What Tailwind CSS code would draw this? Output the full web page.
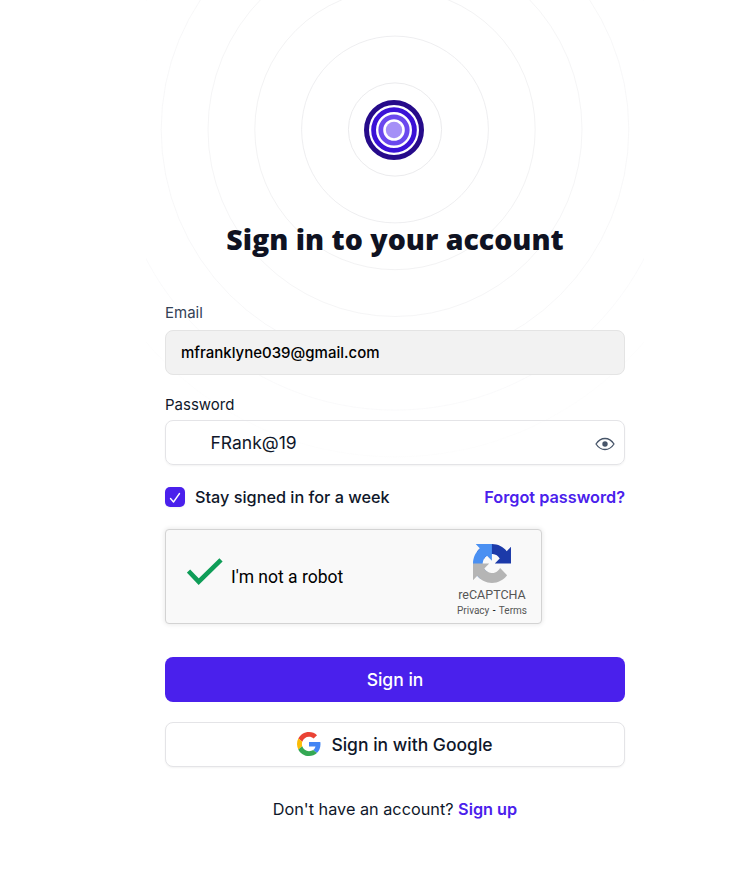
<!DOCTYPE html>
<html lang="en">
<head>
<meta charset="utf-8">
<title>Sign in</title>
<script src="https://cdn.jsdelivr.net/npm/@tailwindcss/browser@4"></script>
</head>
<body class="relative h-[877px] overflow-hidden bg-white font-['Inter',sans-serif] text-[#0f172a]">
<svg class="absolute left-[146px] top-0" width="498" height="460" viewBox="146 0 498 460" fill="none" stroke="#e6e6e9">
  <circle cx="395" cy="129.5" r="46.6" stroke-opacity=".8"/>
  <circle cx="395" cy="129.5" r="93.4" stroke-opacity=".68"/>
  <circle cx="395" cy="129.5" r="140.2" stroke-opacity=".53"/>
  <circle cx="395" cy="129.5" r="187" stroke-opacity=".4"/>
  <circle cx="395" cy="129.5" r="233.8" stroke-opacity=".3"/>
  <circle cx="395" cy="129.5" r="280.6" stroke-opacity=".2"/>
  <circle cx="395" cy="129.5" r="327.4" stroke-opacity=".08"/>
</svg>
<main class="relative ml-[165px] flex w-[460px] flex-col pt-[100px]">
  <svg class="ml-[199px] size-[60px]" viewBox="0 0 60 60" fill="none">
    <circle cx="30" cy="30" r="27.5" stroke="#260b8a" stroke-width="5"/>
    <circle cx="30" cy="30" r="20.4" stroke="#3a12d6" stroke-width="4.8"/>
    <circle cx="30" cy="30" r="13.2" stroke="#6a48ee" stroke-width="4.8"/>
    <circle cx="30" cy="30" r="8.2" fill="#a590f7"/>
  </svg>
  <h1 class="mt-[60px] h-10 whitespace-nowrap text-center font-['Open_Sans',sans-serif] text-[28.5px] leading-[39px] font-extrabold text-[#0f1222]">Sign in to your account</h1>
  <label class="mt-[43px] h-5 text-[15px] leading-5 text-[#334155]">Email</label>
  <div class="mt-[7px] flex h-[45px] items-center rounded-lg border border-[#e4e4e4] bg-[#f2f2f2] px-[15px] pt-px text-[15px] font-medium text-black">mfranklyne039@gmail.com</div>
  <label class="mt-5 h-5 text-[15px] leading-5">Password</label>
  <div class="mt-[5px] flex h-[45px] items-center justify-between rounded-lg border border-[#e4e4e7] pt-px pr-[9px] pl-[44.5px] text-[17.5px] shadow-xs">
    <span>FRank@19</span>
    <svg class="mt-[2px]" width="20" height="14" viewBox="0 0 20 14" fill="none"><path d="M1 7C3.500 3.200 6.500 1.500 10 1.500S16.500 3.200 19 7C16.500 10.800 13.500 12.500 10 12.500S3.500 10.800 1 7Z" stroke="#475569" stroke-width="1.300" stroke-linejoin="round"/><circle cx="10" cy="7" r="2.700" fill="#475569"/></svg>
  </div>
  <div class="mt-[22px] flex h-5 items-center text-[16.25px] font-medium">
    <span class="mr-[10px] flex size-5 items-center justify-center rounded-[5px] bg-[#4a20ec] shadow-xs"><svg width="20" height="20" fill="none" stroke="#fff" stroke-width="1.350" stroke-linecap="round" stroke-linejoin="round"><path d="M5.500 11.500L8.500 15L14.500 6.500"/></svg></span>
    <span>Stay signed in for a week</span>
    <a class="ml-auto font-semibold text-[#4a20ec]">Forgot password?</a>
  </div>
  <section class="mt-[22px] flex h-[95px] w-[377px] rounded-[4px] border border-[#d3d3d3] bg-[#f9f9f9] font-['Roboto',sans-serif] shadow-[0_0_4px_1px_rgba(0,0,0,0.08)]">
    <svg class="mt-[28px] ml-[21px]" width="37" height="29" fill="none"><path d="M1.500 13L11.700 23.700L34 1.800" stroke="#0f9d58" stroke-width="4.600"/></svg>
    <span class="mt-[35px] ml-[7px] text-[17.500px] leading-6 text-black">I'm not a robot</span>
    <div class="mr-[14px] ml-auto flex w-[70px] flex-col items-center pt-[14px] text-[#555]">
      <svg width="38" height="39" viewBox="0 0 64 64" preserveAspectRatio="none">
        <path d="M64 31.955l-.033-1.370V4.687l-7.160 7.160C50.948 4.674 42.033.093 32.050.093c-10.400 0-19.622 4.960-25.458 12.640l11.736 11.860a15.550 15.550 0 0 1 4.754-5.334c2.050-1.600 4.952-2.906 8.968-2.906.485 0 .860.057 1.135.163 4.976.393 9.288 3.140 11.828 7.124l-8.307 8.307L64 31.953" fill="#1c3aa9"/>
        <path d="M31.862.094l-1.370.033H4.594l7.160 7.160C4.580 13.147 0 22.060 0 32.046c0 10.400 4.960 19.622 12.640 25.458L24.500 45.768a15.550 15.550 0 0 1-5.334-4.754c-1.600-2.050-2.906-4.952-2.906-8.968 0-.485.057-.860.163-1.135.393-4.976 3.140-9.288 7.124-11.828l8.307 8.307L31.860.095" fill="#4a90f2"/>
        <path d="M.001 32.045l.033 1.370v25.898l7.160-7.160c5.860 7.173 14.774 11.754 24.760 11.754 10.400 0 19.622-4.960 25.458-12.640l-11.736-11.860a15.550 15.550 0 0 1-4.754 5.334c-2.050 1.600-4.952 2.906-8.968 2.906-.485 0-.860-.057-1.135-.163-4.976-.393-9.288-3.140-11.828-7.124l8.307-8.307L.001 32.045" fill="#b5b5b5"/>
      </svg>
      <div class="mt-1 text-[12.500px] leading-[15px]">reCAPTCHA</div>
      <div class="mt-[2px] whitespace-nowrap text-[10px] leading-[13px]">Privacy <span class="px-[1px] text-black">-</span> Terms</div>
    </div>
  </section>
  <button class="mt-[33px] h-[45px] rounded-lg bg-[#4a20ec] pt-px text-[17.5px] font-medium text-white">Sign in</button>
  <button class="mt-5 flex h-[45px] items-center justify-center gap-[10px] rounded-lg border border-[#e4e4e7] bg-white text-[17.5px] font-medium shadow-xs">
    <svg class="-mt-px" width="24" height="24" viewBox="0 0 48 48"><path fill="#EA4335" d="M24 9.500c3.540 0 6.710 1.220 9.210 3.600l6.850-6.850C35.900 2.380 30.470 0 24 0 14.620 0 6.510 5.380 2.560 13.220l7.980 6.190C12.430 13.720 17.740 9.500 24 9.500z"/><path fill="#4285F4" d="M46.980 24.550c0-1.570-.15-3.090-.38-4.550H24v9.020h12.940c-.58 2.960-2.260 5.480-4.780 7.180l7.730 6c4.510-4.180 7.090-10.360 7.090-17.650z"/><path fill="#FBBC05" d="M10.530 28.590c-.48-1.450-.76-2.990-.76-4.590s.27-3.140.76-4.590l-7.980-6.190C.92 16.460 0 20.120 0 24s.92 7.540 2.560 10.780l7.970-6.190z"/><path fill="#34A853" d="M24 48c6.480 0 11.930-2.130 15.890-5.810l-7.730-6c-2.150 1.450-4.920 2.300-8.160 2.300-6.260 0-11.570-4.220-13.470-9.910l-7.980 6.190C6.510 42.620 14.620 48 24 48z"/></svg>
    <span class="pt-px">Sign in with Google</span>
  </button>
  <p class="mt-[32px] text-center text-[16.25px] leading-5">Don't have an account? <a class="font-semibold text-[#4a20ec]">Sign up</a></p>
</main>
</body>
</html>
